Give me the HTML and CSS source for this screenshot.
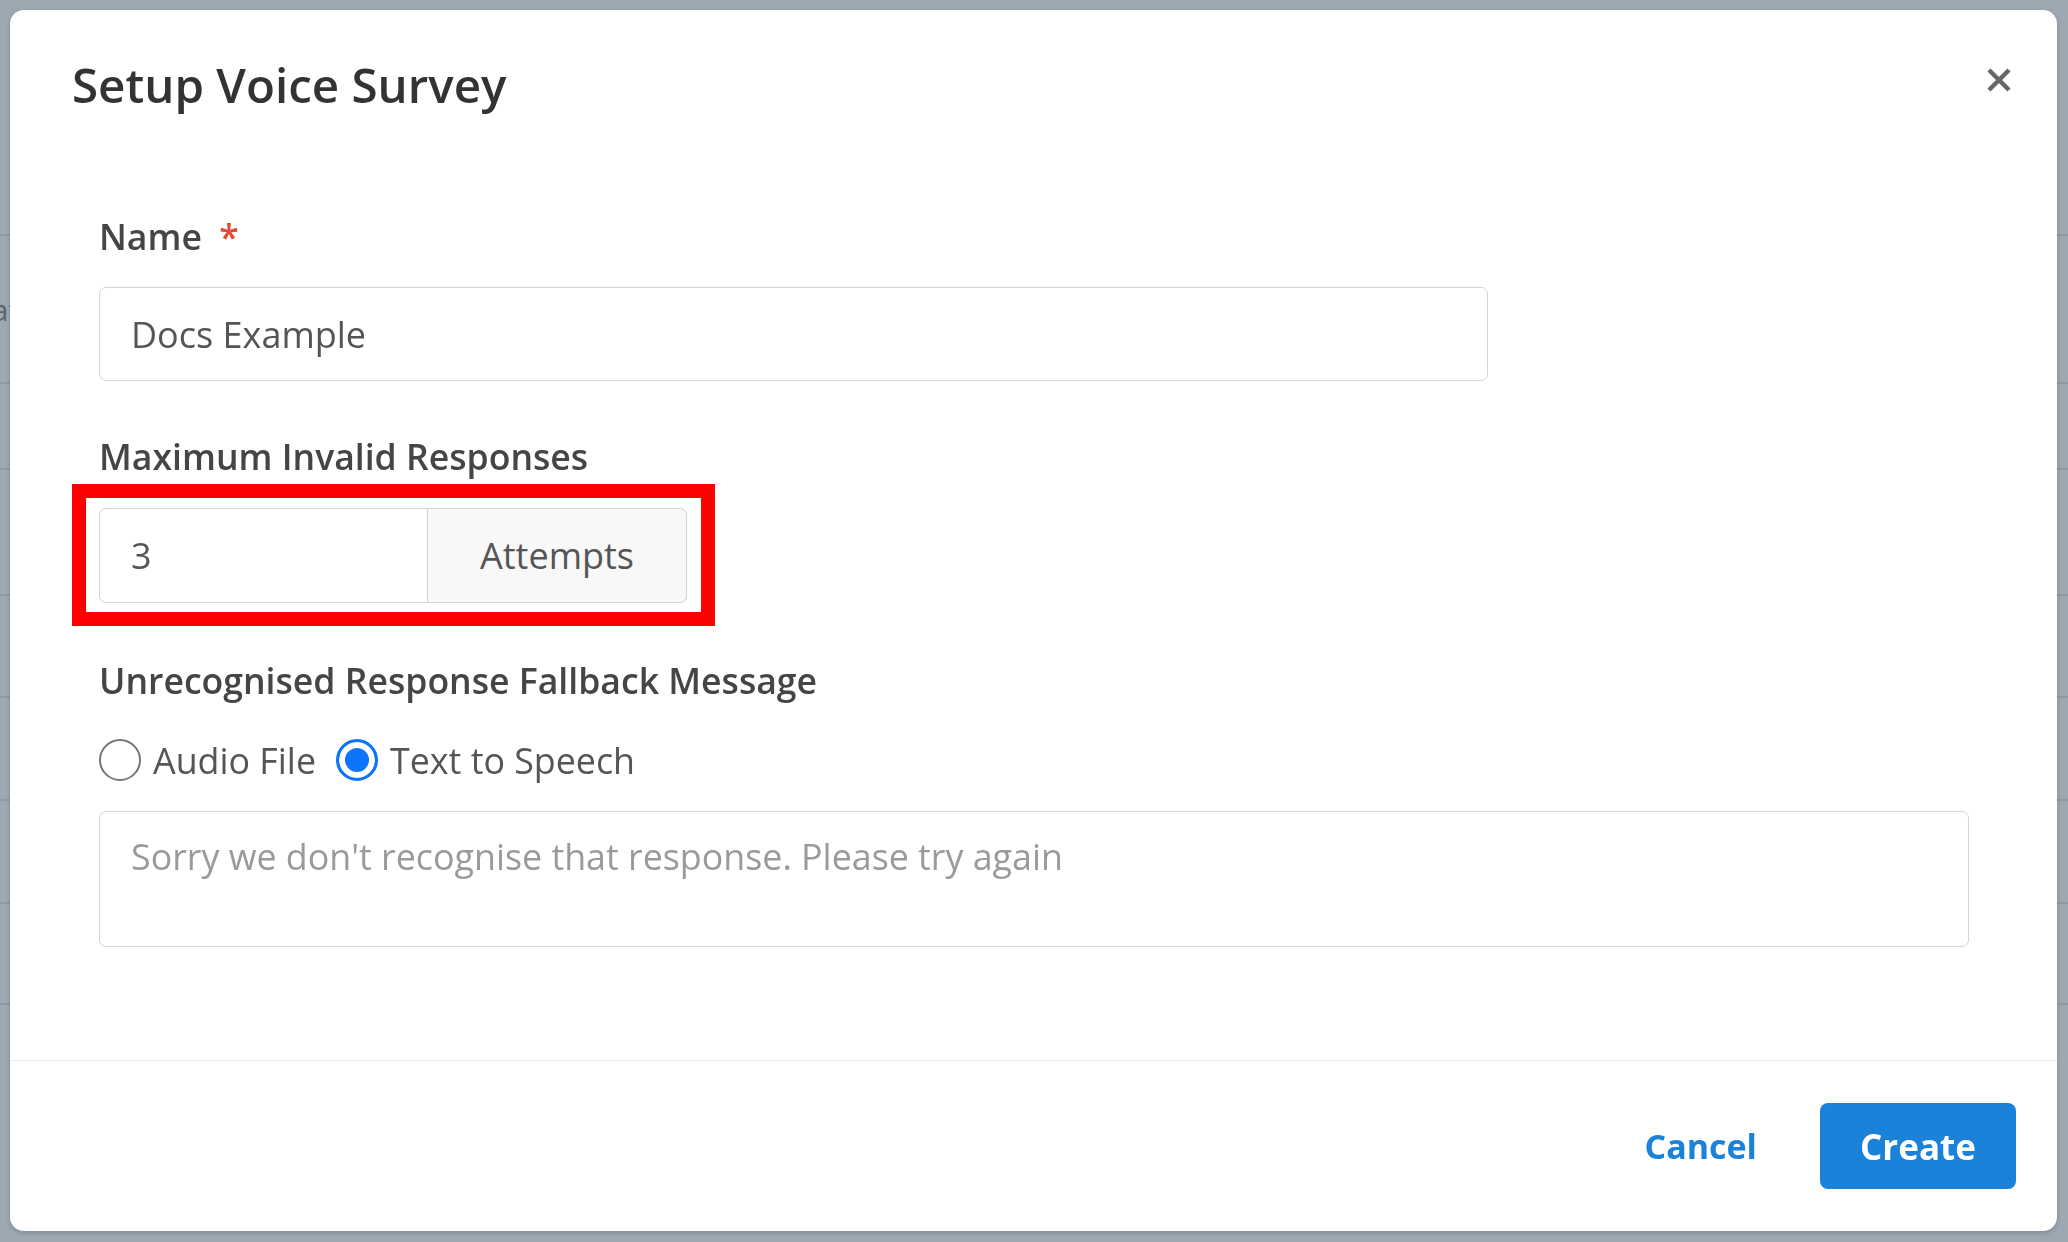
FILE: index.html
```html
<!DOCTYPE html>
<html lang="en">
<head>
<meta charset="utf-8">
<title>Setup Voice Survey</title>
<link rel="stylesheet" href="styles.css">
</head>
<body>
<div class="page">
  <div class="bg-row r1"></div>
  <div class="bg-row r2"><span class="bg-cell">Data</span></div>
  <div class="bg-row r3"></div>
  <div class="bg-row r4"></div>
  <div class="bg-row r5"></div>
  <div class="bg-row r6"></div>
  <div class="bg-row r7"></div>
  <div class="bg-row r8"></div>
</div>
<div class="overlay">
  <div class="modal">
    <div class="modal-header">
      <h2 class="modal-title">Setup Voice Survey</h2>
      <button class="close" type="button" aria-label="Close">
        <svg width="26" height="26" viewBox="0 0 26 26"><path d="M3 3 L23 23 M23 3 L3 23" stroke="#666" stroke-width="4.5" fill="none"/></svg>
      </button>
    </div>
    <div class="modal-body">
      <div class="field">
        <label class="label">Name <span class="req">*</span></label>
        <input class="input input-name" type="text" value="Docs Example">
      </div>
      <div class="field field-max">
        <label class="label">Maximum Invalid Responses</label>
        <div class="highlight">
          <div class="input-group">
            <input class="input group-input" type="text" value="3">
            <span class="addon">Attempts</span>
          </div>
        </div>
      </div>
      <div class="field field-msg">
        <label class="label label-msg">Unrecognised Response Fallback Message</label>
        <div class="radios">
          <span class="radio"></span><span class="radio-text">Audio File</span>
          <span class="radio checked"></span><span class="radio-text">Text to Speech</span>
        </div>
        <textarea class="textarea" placeholder="Sorry we don't recognise that response. Please try again"></textarea>
      </div>
    </div>
    <div class="modal-footer">
      <button class="btn-link" type="button">Cancel</button>
      <button class="btn-primary" type="button">Create</button>
    </div>
  </div>
</div>
</body>
</html>
```
FILE: styles.css
```css
* { box-sizing: border-box; }
html, body { margin: 0; padding: 0; }
body {
  width: 2068px;
  height: 1242px;
  overflow: hidden;
  background: #9da8b2;
  font-family: "Open Sans", "Noto Sans", sans-serif;
}
.page { width: 100%; }
.bg-row { border-bottom: 2px solid #8e99a3; display: flex; align-items: center; }
.r1 { height: 236px; }
.r2 { height: 148px; }
.r3 { height: 86px; }
.r4 { height: 126px; }
.r5 { height: 102px; }
.r6 { height: 103px; }
.r7 { height: 103px; }
.r8 { height: 101px; }
.bg-cell { margin-left: -30px; font-size: 30px; color: #5b646c; }

.overlay {
  position: fixed;
  inset: 0;
  padding: 10px 11px 11px 10px;
  display: flex;
}
.modal {
  flex: 1;
  background: #fff;
  border-radius: 14px;
  display: flex;
  flex-direction: column;
  box-shadow: 0 2px 5px rgba(0,0,0,0.18);
}
.modal-header {
  display: flex;
  justify-content: space-between;
  align-items: flex-start;
  padding: 47px 45px 0 62px;
}
.modal-title {
  margin: 0;
  font-size: 47.5px;
  line-height: 56px;
  font-weight: 600;
  color: #333;
}
.close {
  margin-top: 10px;
  padding: 0;
  border: 0;
  background: none;
  width: 26px;
  height: 26px;
  display: block;
}
.close svg { display: block; }

.modal-body {
  flex: 1;
  padding: 102px 88px 0 89px;
}
.field { display: flex; flex-direction: column; align-items: flex-start; }
.field-max { margin-top: 54px; }
.field-msg { margin-top: 56px; }
.label {
  display: block;
  font-size: 35.6px;
  line-height: 42px;
  font-weight: 600;
  color: #454545;
  margin-bottom: 30px;
}
.field-max .label { margin-bottom: 31px; }
.req { color: #e2492e; margin-left: 8px; }
.label-msg { margin-bottom: 0; }

.input {
  font-family: inherit;
  font-size: 36px;
  color: #555;
  border: 1.5px solid #cfd5dc;
  border-radius: 7px;
  padding: 0 0 0 31px;
  height: 94px;
  outline: none;
  background: #fff;
}
.input-name { width: 1389px; }

.highlight { position: relative; }
.highlight::after {
  content: "";
  position: absolute;
  top: -24px;
  left: -27px;
  right: -28px;
  bottom: -23px;
  border: 14px solid #ff0000;
  pointer-events: none;
}
.input-group {
  display: flex;
  width: 588px;
  height: 95px;
}
.group-input {
  width: 329px;
  height: 95px;
  border-radius: 7px 0 0 7px;
}
.addon {
  width: 259px;
  display: flex;
  align-items: center;
  justify-content: center;
  font-size: 36px;
  color: #555;
  background: #f8f8f8;
  border: 1.5px solid #cfd5dc;
  border-left: 0;
  border-radius: 0 7px 7px 0;
}

.radios {
  display: flex;
  align-items: center;
  height: 42px;
  margin-top: 38px;
}
.radio {
  width: 42px;
  height: 42px;
  border-radius: 50%;
  border: 2.5px solid #777;
  background: #fff;
  flex: none;
}
.radio.checked {
  border: 3px solid #0d75fb;
  background: #0d75fb;
  box-shadow: inset 0 0 0 6px #fff;
}
.radio-text {
  font-size: 35.8px;
  color: #555;
  margin-left: 12px;
  margin-right: 20px;
}
.textarea {
  margin-top: 30px;
  width: 100%;
  height: 136px;
  resize: none;
  font-family: inherit;
  font-size: 35.8px;
  line-height: 52px;
  color: #555;
  border: 1.5px solid #cfd5dc;
  border-radius: 7px;
  padding: 18px 31px;
  outline: none;
}
.textarea::placeholder { color: #9a9a9a; }

.modal-footer {
  border-top: 1.5px solid #ebedef;
  padding: 42px 41px 42px 0;
  display: flex;
  justify-content: flex-end;
  align-items: center;
}
.btn-link {
  border: 0;
  background: none;
  padding: 0;
  font-family: inherit;
  font-size: 34px;
  font-weight: 700;
  color: #1a82d8;
  margin-right: 63px;
}
.btn-primary {
  width: 196px;
  height: 86px;
  border: 0;
  border-radius: 8px;
  background: #1a82d8;
  color: #fff;
  font-family: inherit;
  font-size: 35px;
  font-weight: 700;
}
```
